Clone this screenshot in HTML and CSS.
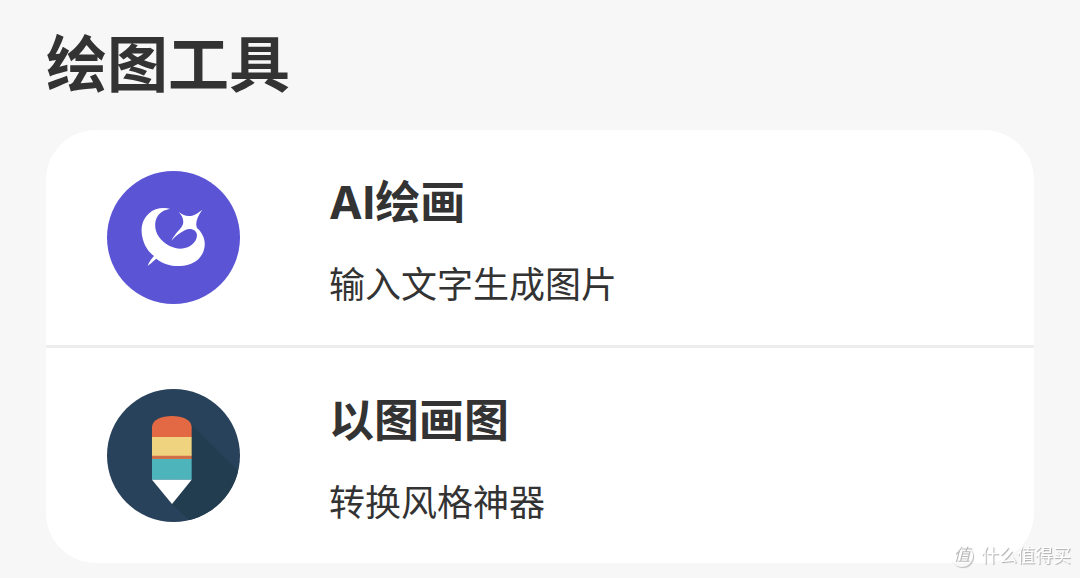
FILE: index.html
```html
<!DOCTYPE html>
<html lang="zh-CN">
<head>
<meta charset="utf-8">
<meta name="viewport" content="width=device-width, initial-scale=1">
<title>绘图工具</title>
<link rel="stylesheet" href="styles.css">
</head>
<body>
<main class="page">
  <h1 class="page-title">绘图工具</h1>
  <ul class="tool-list">
    <li class="tool">
      <svg class="tool-icon" viewBox="21 18 399 399" aria-hidden="true">
        <circle cx="220.500" cy="217.500" r="199.500" fill="#5b55d6"/>
        <path fill="#fff" d="M211 132C190 126 163 130 146 146C127 163 121 190 127 216C132 241 144 259 162 273C155 281 148 290 143 302C152 296 160 288 169 281C188 296 212 304 240 303C279 302 307 281 313 249C318 225 308 204 291 189C285 174 291 157 307 134C290 147 280 153 267 153C254 153 245 147 236 140C246 152 252 163 249 177C246 190 227 202 214 227C229 211 241 202 256 195C272 188 290 194 291 211C290 233 269 250 242 251C218 251 192 237 177 216C164 198 162 174 171 157C179 142 193 134 211 132Z"/>
      </svg>
      <div class="tool-text">
        <h2 class="tool-name">AI绘画</h2>
        <p class="tool-desc">输入文字生成图片</p>
      </div>
    </li>
    <li class="tool">
      <svg class="tool-icon" viewBox="21 27 399 399" aria-hidden="true">
        <defs><clipPath id="disc"><circle cx="220.500" cy="226.500" r="199.500"/></clipPath></defs>
        <circle cx="220.500" cy="226.500" r="199.500" fill="#29425b"/>
        <path clip-path="url(#disc)" fill="#233d50" d="M262 122L440 296V440H286L216 371Z"/>
        <path fill="#e26943" d="M156 172V140C158 119 184 108 216 108S273 119 275 140V172Z"/>
        <path fill="#efd37e" d="M156 171H275V228H156Z"/>
        <path fill="#d0704a" d="M156 227H275V237H156Z"/>
        <path fill="#4eb4bc" d="M156 237H275V299H156Z"/>
        <path fill="#fff" d="M156 299H275L216 372Z"/>
      </svg>
      <div class="tool-text">
        <h2 class="tool-name">以图画图</h2>
        <p class="tool-desc">转换风格神器</p>
      </div>
    </li>
  </ul>
</main>
<div class="watermark"><span class="watermark-badge">值</span><span>什么值得买</span></div>
</body>
</html>
```
FILE: styles.css
```css
* {
  box-sizing: border-box;
}

body {
  margin: 0;
  background: #f7f7f7;
  color: #333;
  font-family: Inter, "Noto Sans CJK SC", sans-serif;
}

.page {
  padding: 20px 46px 15px;
}

.page-title {
  margin: 0 0 20px;
  font-size: 61px;
  line-height: 90px;
  font-weight: 700;
}

.tool-list {
  margin: 0;
  padding: 0;
  list-style: none;
  background: #fff;
  border-radius: 50px;
}

.tool {
  display: flex;
  align-items: center;
  gap: 89px;
  padding: 34px 61px;
}

.tool + .tool {
  border-top: 3px solid #ededed;
}

.tool-icon {
  flex: none;
  width: 133px;
  height: 133px;
}

.tool-text {
  padding-top: 6px;
}

.tool-name {
  margin: 0 0 23px;
  font-size: 45px;
  line-height: 66px;
  font-weight: 700;
}

.tool-desc {
  margin: 0;
  font-size: 36px;
  line-height: 52px;
}

.watermark {
  position: fixed;
  right: 9px;
  bottom: 9px;
  display: flex;
  align-items: center;
  gap: 8px;
  color: #fff;
  font-size: 18px;
  line-height: 26px;
  text-shadow: 1px 1px 1px #aaa;
}

.watermark-badge {
  width: 22px;
  height: 22px;
  border-radius: 50%;
  box-shadow: 1px 1px 1px #bbb;
  color: #bbb;
  font-size: 17px;
  font-style: italic;
  line-height: 21px;
  text-align: center;
  text-shadow: none;
}
```
